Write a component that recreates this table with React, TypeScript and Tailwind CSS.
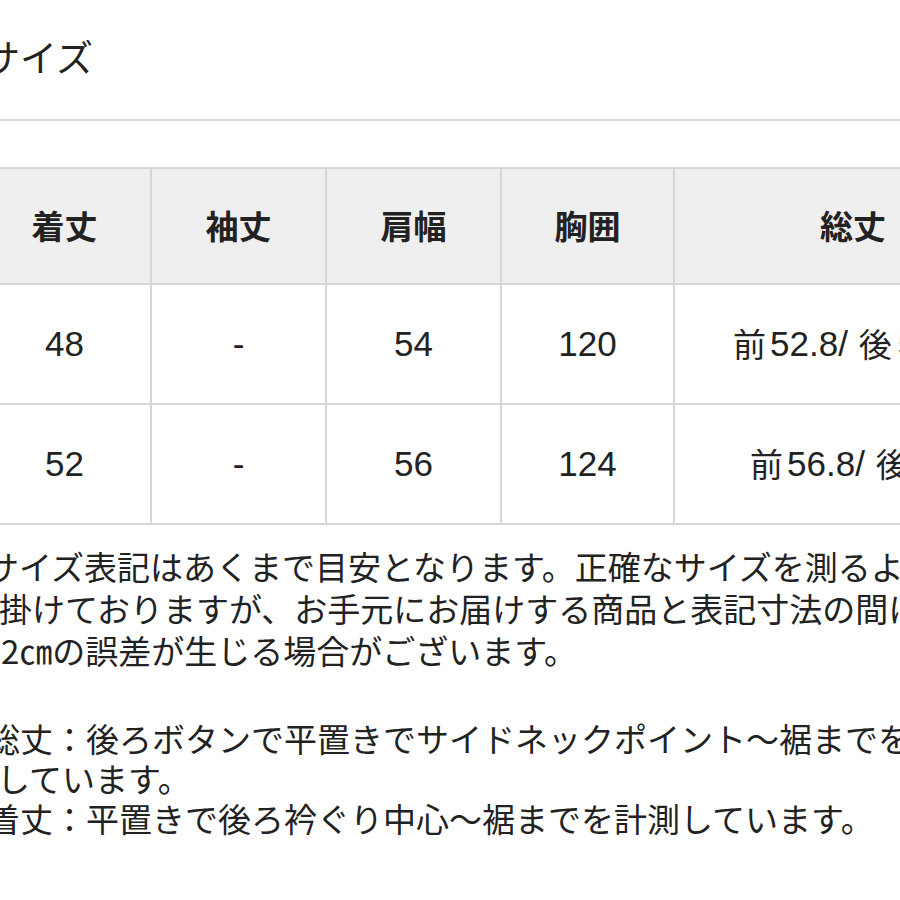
export default function App() {
  const head = ['着丈', '袖丈', '肩幅', '胸囲', '総丈']
  const rows = [
    { cells: ['48', '-', '54', '120'], front: '52.8', back: '56.8', pad: 'pl-[58px]' },
    { cells: ['52', '-', '56', '124'], front: '56.8', back: '60.8', pad: 'pl-[75px]' },
  ]

  return (
    <div className="w-[900px] h-[900px] overflow-hidden bg-white text-[#222] font-['Noto_Sans_CJK_JP',sans-serif]">
      {/* Title */}
      <h2 className="mt-[38px] ml-[-17px] text-[37px] leading-[37px] font-normal whitespace-nowrap">サイズ</h2>

      <div className="mt-[44px] h-[2px] bg-[#d6d6d6]" />

      {/* Size table */}
      <div className="mt-[46px] ml-[-23px] w-[1056px] grid grid-cols-[171px_173px_173px_171px_356px] grid-rows-[114px_118px_118px] gap-[2px] p-[2px] bg-[#d6d6d6]">
        {head.map((h) => (
          <div key={h} className="bg-[#efefef] flex items-center justify-center text-[33px] font-bold">
            {h}
          </div>
        ))}
        {rows.map((r) => (
          <>
            {r.cells.map((c, i) => (
              <div
                key={r.front + i}
                className="bg-white flex items-center justify-center text-[35px] font-['Liberation_Sans','Noto_Sans_CJK_JP',sans-serif]"
              >
                {c}
              </div>
            ))}
            <div
              key={r.front + 'total'}
              className={`bg-white flex items-center whitespace-nowrap text-[35px] font-['Liberation_Sans','Noto_Sans_CJK_JP',sans-serif] ${r.pad}`}
            >
              <span className="text-[33px] font-['Noto_Sans_CJK_JP',sans-serif] mr-[4px]">前</span>
              {r.front}/
              <span className="text-[33px] font-['Noto_Sans_CJK_JP',sans-serif] ml-[11px] mr-[6px]">後</span>
              {r.back}
            </div>
          </>
        ))}
      </div>

      {/* Notes */}
      <div className="mt-[20px] text-[33px] whitespace-nowrap">
        <p className="ml-[-14px] leading-[42px]">サイズ表記はあくまで目安となります。正確なサイズを測るよう</p>
        <p className="ml-[-1px] leading-[42px]">掛けておりますが、お手元にお届けする商品と表記寸法の間に</p>
        <p className="ml-[1px] leading-[42px]">2㎝の誤差が生じる場合がございます。</p>

        <p className="mt-[47px] ml-[-13px] leading-[40px]">総丈：後ろボタンで平置きでサイドネックポイント〜裾までを</p>
        <p className="ml-[-3px] leading-[40px]">しています。</p>
        <p className="ml-[-13px] leading-[40px]">着丈：平置きで後ろ衿ぐり中心〜裾までを計測しています。</p>
      </div>
    </div>
  )
}
